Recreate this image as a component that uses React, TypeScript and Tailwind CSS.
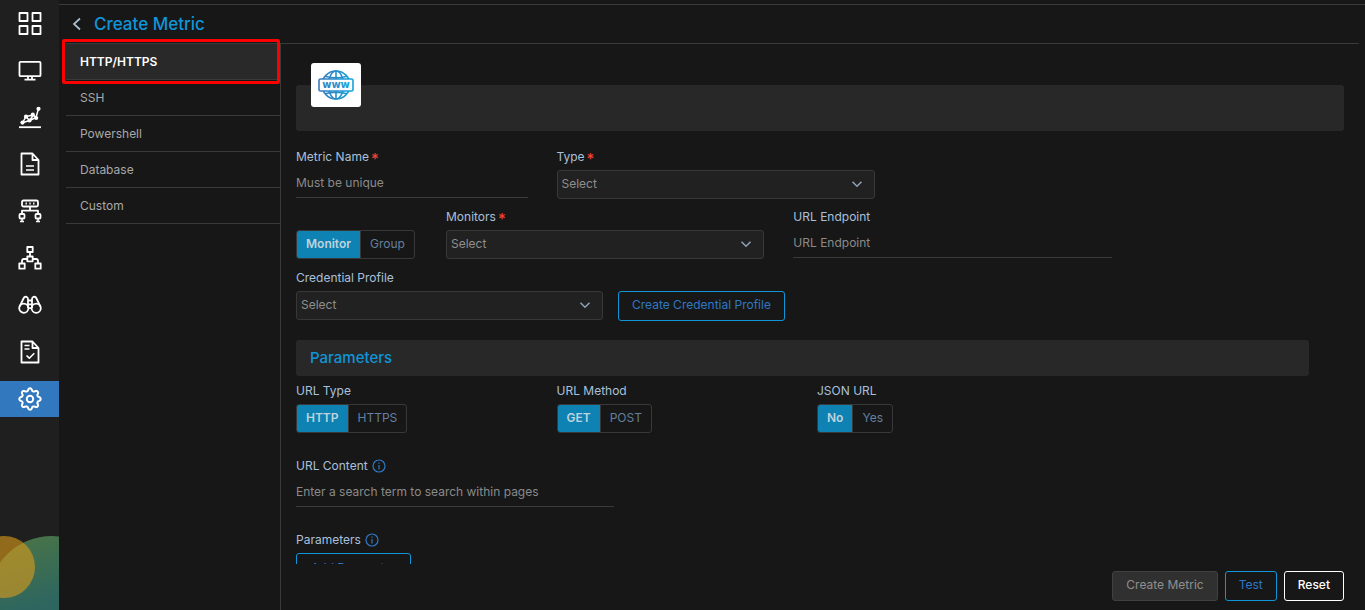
import { useState } from "react";
import type { ReactNode } from "react";

/** Outline of the eight-toothed gear in the side navigation */
const gearPath =
  Array.from({ length: 96 }, (_, i) => {
    const a = (i / 96) * Math.PI * 2;
    const r = 9.4 + 1.4 * Math.tanh(1.4 * Math.cos(8 * a));
    return `${i ? "L" : "M"}${(12 + r * Math.sin(a)).toFixed(2)} ${(12 - r * Math.cos(a)).toFixed(2)}`;
  }).join("") + "Z";

const navItems: { label: string; icon: ReactNode }[] = [
  {
    label: "Dashboard",
    icon: (
      <>
        <rect x="1.5" y="2" width="8" height="8" />
        <rect x="14.5" y="2" width="8" height="8" />
        <rect x="1.5" y="15" width="8" height="8" />
        <rect x="14.5" y="15" width="8" height="8" />
      </>
    ),
  },
  {
    label: "Monitors",
    icon: (
      <>
        <rect x="1.5" y="3.8" width="21" height="14.4" rx="1" />
        <path d="M10 18.5v3M14 18.5v3M6.5 21.6h11" />
      </>
    ),
  },
  {
    label: "Metrics",
    icon: (
      <>
        <path d="M1 22.2h22" />
        <path d="M4.5 17.8 8 11.5l3.5 4 4-5.5 2.5 2.5 2.5-9M4.5 17.8l7-2.3M8 11.5l7.5-1.5M11.5 15.5l6.5-3" strokeWidth="1.5" />
        <g fill="currentColor" stroke="none">
          <circle cx="4.5" cy="17.6" r="2.1" />
          <circle cx="8" cy="11.7" r="2.1" />
          <circle cx="11.5" cy="15.5" r="2.1" />
          <circle cx="14.8" cy="9.7" r="2.1" />
          <circle cx="18.2" cy="13" r="2.1" />
          <circle cx="20.5" cy="3.8" r="2.1" />
        </g>
      </>
    ),
  },
  {
    label: "Reports",
    icon: (
      <>
        <path d="M3.5 1.5h11l6 6.5v14.5h-17zM14.5 1.5V8h6" />
        <path d="M8 14h8M8 18h8" strokeWidth="1.6" />
      </>
    ),
  },
  {
    label: "Network",
    icon: (
      <>
        <rect x="4" y="1.5" width="16" height="6" rx="1.5" />
        <path d="M7.5 4.5h1.4M11.3 4.5h1.4M15.1 4.5h1.4M12 7.5v4M4 15v-3.3h16V15" />
        <rect x="1.5" y="15" width="5" height="4.5" rx="1" />
        <rect x="17.5" y="15" width="5" height="4.5" rx="1" />
        <path d="M4 19.5v3M20 19.5v3M2 22.5h4M18 22.5h4" strokeWidth="1.5" />
      </>
    ),
  },
  {
    label: "Topology",
    icon: (
      <>
        <rect x="9.3" y="1" width="5.4" height="5" />
        <rect x="9.3" y="10.5" width="5.4" height="4.8" />
        <rect x="1.3" y="17.5" width="5.4" height="5.2" />
        <rect x="17.3" y="17.5" width="5.4" height="5.2" />
        <path d="M12 6v4.5M9.3 13H6q-2 0-2 2v2.5M14.7 13H18q2 0 2 2v2.5" />
      </>
    ),
  },
  {
    label: "Explorer",
    icon: (
      <>
        <circle cx="5.8" cy="15.2" r="4.6" />
        <circle cx="18.2" cy="15.2" r="4.6" />
        <path d="M1.6 13.6 5.5 5.5q1-2.2 3-1.6 1.5.5 1.5 2.4v8.7M22.4 13.6 18.5 5.5q-1-2.2-3-1.6-1.5.5-1.5 2.4v8.7M10 7.5h4M10 11.3h4M10 15.2h4" />
      </>
    ),
  },
  {
    label: "Audit",
    icon: (
      <>
        <path d="M3.5 1.5h11l6 6.5v14.5h-17zM14.5 1.5V8h6" />
        <path d="M6.5 5.5h5M6.5 9h5M8.5 15.5l2.8 2.7 5-5" strokeWidth="1.6" />
      </>
    ),
  },
  {
    label: "Settings",
    icon: (
      <>
        <path d={gearPath} strokeWidth="2" />
        <circle cx="12" cy="12" r="3.2" strokeWidth="2" />
      </>
    ),
  },
];

const metricTabs = ["HTTP/HTTPS", "SSH", "Powershell", "Database", "Custom"];

const outlineButton = "h-[30px] rounded-[3px] border px-[13px] pb-0.5 text-[12px]";

function Chevron() {
  return (
    <svg viewBox="0 0 12 12" className="pointer-events-none absolute top-2 right-3 size-3 text-[#8fa3b8]" fill="none" stroke="currentColor" strokeWidth="1.5">
      <path d="M1.5 3.7 6 8.2l4.5-4.5" />
    </svg>
  );
}

function InfoIcon() {
  return (
    <svg viewBox="0 0 14 14" className="size-3.5 text-[#2f78c4]" fill="none" stroke="currentColor" strokeWidth="1.2">
      <circle cx="7" cy="7" r="6" />
      <path d="M7 6v4.5M7 3.4v1.3" />
    </svg>
  );
}

function FieldLabel({ htmlFor, children, required, info }: { htmlFor: string; children: string; required?: boolean; info?: boolean }) {
  return (
    <div className="mb-[3px] flex h-5 items-center gap-1 text-[#a9c0dc]">
      <label htmlFor={htmlFor} className="flex items-center gap-0.5">
        {children}
        {required && <span className="h-3 text-[15px] font-medium text-[#f04134]">*</span>}
      </label>
      {info && <InfoIcon />}
    </div>
  );
}

function TextField({ id, placeholder }: { id: string; placeholder: string }) {
  return (
    <input
      id={id}
      type="text"
      placeholder={placeholder}
      className="block h-7 w-full border-b border-[#3a3a3a] bg-transparent pb-0.5 text-[#a0a0a0] outline-none placeholder:text-[#8a8a8a]"
    />
  );
}

function SelectField({ id }: { id: string }) {
  return (
    <div className="relative">
      <select
        id={id}
        className="block h-[29px] w-full appearance-none rounded-[3px] border border-[#383838] bg-[#212121] px-1 pb-0.5 text-[#8f8f8f] outline-none"
      >
        <option>Select</option>
      </select>
      <Chevron />
    </div>
  );
}

function Toggle({ id, options }: { id: string; options: string[] }) {
  const [active, setActive] = useState(options[0]);
  return (
    <div id={id} className="inline-flex h-[29px] overflow-hidden rounded-[3px] border border-[#383838]">
      {options.map((o) => (
        <button
          key={o}
          type="button"
          aria-pressed={o === active}
          onClick={() => setActive(o)}
          className={`border-l border-[#383838] px-[9px] pb-0.5 first:border-l-0 ${
            o === active ? "bg-[#0d82b3] font-semibold text-[#bfd3de]" : "text-[#64809f]"
          }`}
        >
          {o}
        </button>
      ))}
    </div>
  );
}

function SideNav() {
  return (
    <nav className="relative flex w-[59px] shrink-0 flex-col gap-[11px] overflow-hidden bg-[#1f1f1f] pt-[5px]">
      <svg viewBox="0 0 59 74" className="absolute bottom-0 left-0 w-full">
        <defs>
          <linearGradient id="leaf" x1="0" y1="0" x2="0.3" y2="1">
            <stop offset="0" stopColor="#4d7645" />
            <stop offset="0.6" stopColor="#2e665f" />
          </linearGradient>
        </defs>
        <circle cx="52" cy="64" r="64" fill="url(#leaf)" />
        <circle cx="4" cy="31" r="31" fill="#d89a1c" fillOpacity="0.62" />
      </svg>
      {navItems.map((n) => (
        <a
          key={n.label}
          href="#"
          aria-label={n.label}
          className={`relative flex h-9 shrink-0 items-center justify-center text-white ${n.label === "Settings" ? "bg-[#3178be]" : ""}`}
        >
          <svg viewBox="0 0 24 24" className="size-6" fill="none" stroke="currentColor" strokeWidth="1.8" strokeLinejoin="round">
            {n.icon}
          </svg>
        </a>
      ))}
    </nav>
  );
}

function MetricTabs() {
  const [tab, setTab] = useState(metricTabs[0]);
  return (
    <aside className="relative w-[215px] shrink-0 border-r border-[#3a3a3a]">
      {metricTabs.map((t) => (
        <button
          key={t}
          type="button"
          onClick={() => setTab(t)}
          className={`block h-9 w-full border-b border-[#3a3a3a] px-3.5 text-left ${
            t === tab ? "bg-[#292929] font-semibold text-white" : "text-[#a8a8a8]"
          }`}
        >
          {t}
        </button>
      ))}
      <div className="pointer-events-none absolute -top-[5px] right-0 -left-1 h-[45px] rounded-xs border-3 border-[#fe0000]" />
    </aside>
  );
}

function WwwLogo() {
  return (
    <div className="absolute -top-[22px] left-[15px] flex h-11 w-[50px] items-center justify-center rounded-[3px] bg-white">
      <svg viewBox="0 0 36 30" className="h-[30px] w-9" fill="none" stroke="url(#globe)" strokeWidth="1.6">
        <defs>
          <linearGradient id="globe" gradientUnits="userSpaceOnUse" x1="0" y1="0" x2="36" y2="0">
            <stop offset="0" stopColor="#3a79bd" />
            <stop offset="1" stopColor="#14a5dc" />
          </linearGradient>
        </defs>
        <circle cx="18" cy="15" r="14" />
        <ellipse cx="18" cy="15" rx="7.5" ry="14" />
        <path d="M18 1v28M7 6.2q11 3.4 22 0M7 23.8q11-3.4 22 0" />
        <rect x="1" y="9" width="34" height="12" rx="1.5" fill="#fff" />
        <text x="18" y="17.8" textAnchor="middle" fontFamily="DejaVu Sans" fontSize="10" fontWeight="700" fill="url(#globe)" stroke="none">
          www
        </text>
      </svg>
    </div>
  );
}

export default function App() {
  return (
    <div className="flex h-screen bg-[#171717] font-['Inter','Noto_Sans',sans-serif] text-[12px] leading-4">
      <SideNav />

      <div className="mt-1 flex min-w-0 flex-1 flex-col border-t border-[#3a3a3a]">
        <header className="ml-[7px] flex h-[38px] shrink-0 items-center gap-3 pl-1.5">
          <button type="button" aria-label="Back" className="text-[#a9bdd3]">
            <svg viewBox="0 0 10 14" className="h-3.5 w-2.5" fill="none" stroke="currentColor" strokeWidth="1.7">
              <path d="M8 1.5 2 7l6 5.5" />
            </svg>
          </button>
          <h1 className="text-[17px] font-medium text-[#0f95d8]">Create Metric</h1>
        </header>

        <div className="mr-1.5 ml-[7px] flex min-h-0 flex-1 border-t border-[#3a3a3a]">
          <MetricTabs />

          <main className="flex min-w-0 flex-1 flex-col pl-[15px]">
            <form className="min-h-0 flex-1 overflow-y-auto [scrollbar-width:none]">
              <div className="relative mt-[41px] mr-[15px] h-[46px] rounded-[3px] bg-[#282828]">
                <WwwLogo />
              </div>

              <div className="mr-[21px]">
                <div className="mt-4 flex">
                  <div className="w-1/4 pr-[29px]">
                    <FieldLabel htmlFor="metric-name" required>Metric Name</FieldLabel>
                    <TextField id="metric-name" placeholder="Must be unique" />
                  </div>
                  <div className="w-1/3 pr-[29px]">
                    <FieldLabel htmlFor="type" required>Type</FieldLabel>
                    <SelectField id="type" />
                  </div>
                </div>

                <div className="mt-2 flex">
                  <div className="flex w-[150px] shrink-0 items-end">
                    <Toggle id="target" options={["Monitor", "Group"]} />
                  </div>
                  <div className="w-1/3 pr-[29px]">
                    <FieldLabel htmlFor="monitors" required>Monitors</FieldLabel>
                    <SelectField id="monitors" />
                  </div>
                  <div className="w-1/3 pr-[29px]">
                    <FieldLabel htmlFor="endpoint">URL Endpoint</FieldLabel>
                    <TextField id="endpoint" placeholder="URL Endpoint" />
                  </div>
                </div>

                <div className="mt-[9px] flex gap-[15px]">
                  <div className="w-[307px]">
                    <FieldLabel htmlFor="credential">Credential Profile</FieldLabel>
                    <SelectField id="credential" />
                  </div>
                  <div className="pt-[23px]">
                    <button type="button" className={`${outlineButton} border-[#0f95d8] text-[#2f78c4]`}>
                      Create Credential Profile
                    </button>
                  </div>
                </div>

                <h2 className="mt-[19px] mr-[29px] flex h-9 items-center rounded-[3px] bg-[#282828] px-3.5 text-[15px] font-medium text-[#0f95d8]">
                  Parameters
                </h2>

                <div className="mt-[5px] flex">
                  <div className="w-1/4">
                    <FieldLabel htmlFor="url-type">URL Type</FieldLabel>
                    <Toggle id="url-type" options={["HTTP", "HTTPS"]} />
                  </div>
                  <div className="w-1/4">
                    <FieldLabel htmlFor="url-method">URL Method</FieldLabel>
                    <Toggle id="url-method" options={["GET", "POST"]} />
                  </div>
                  <div className="w-1/4">
                    <FieldLabel htmlFor="json-url">JSON URL</FieldLabel>
                    <Toggle id="json-url" options={["No", "Yes"]} />
                  </div>
                </div>

                <div className="mt-[23px] w-1/3 pr-[29px]">
                  <FieldLabel htmlFor="url-content" info>URL Content</FieldLabel>
                  <TextField id="url-content" placeholder="Enter a search term to search within pages" />
                </div>

                <div className="mt-[23px]">
                  <FieldLabel htmlFor="add-parameter" info>Parameters</FieldLabel>
                  <button id="add-parameter" type="button" className="h-[30px] rounded-[3px] border border-[#0f95d8] px-3.5 text-[#2f78c4]">
                    Add Parameter
                  </button>
                </div>
              </div>
            </form>

            <footer className="flex shrink-0 justify-end gap-[7px] pt-[7px] pr-[15px] pb-[9px]">
              <button type="button" className={`${outlineButton} border-[#404040] bg-[#303030] text-[#8f8f8f]`}>
                Create Metric
              </button>
              <button type="button" className={`${outlineButton} border-[#0f95d8] text-[#2f78c4]`}>
                Test
              </button>
              <button type="button" className={`${outlineButton} border-white font-medium text-white`}>
                Reset
              </button>
            </footer>
          </main>
        </div>
      </div>
    </div>
  );
}
